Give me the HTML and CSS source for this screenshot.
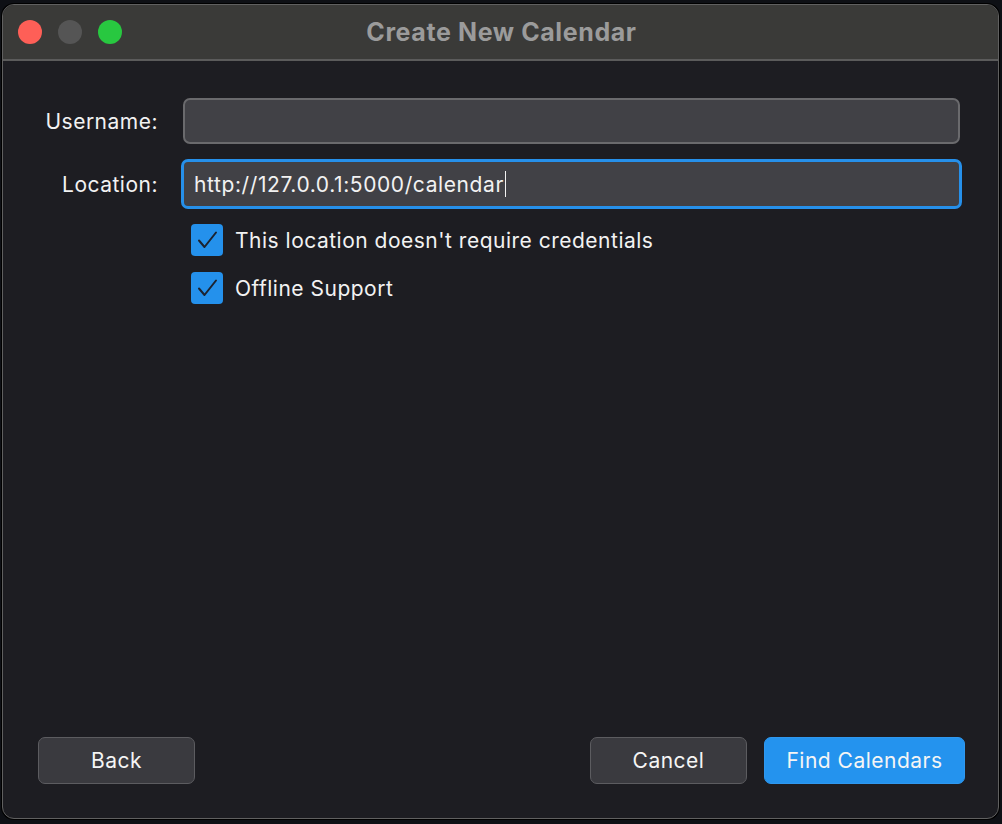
FILE: index.html
```html
<!DOCTYPE html>
<html>
<head>
<meta charset="utf-8">
<link rel="stylesheet" href="styles.css">
</head>
<body>
<div class="window">
  <div class="titlebar">
    <div class="lights">
      <span class="light red"></span>
      <span class="light gray"></span>
      <span class="light green"></span>
    </div>
    <div class="title">Create New Calendar</div>
  </div>
  <div class="content">
    <div class="form">
      <div class="row">
        <label class="label">Username:</label>
        <div class="input"></div>
      </div>
      <div class="row row-loc">
        <label class="label">Location:</label>
        <div class="input focused"><span>http://127.0.0.1:5000/calendar</span><span class="caret"></span></div>
      </div>
      <div class="checks">
        <div class="check">
          <span class="box"><svg width="32" height="32" viewBox="0 0 32 32"><path d="M8 16.5 L13.5 23 L25 8.5" fill="none" stroke="#1c2330" stroke-width="2" stroke-linecap="round" stroke-linejoin="round"/></svg></span>
          <span class="check-text">This location doesn't require credentials</span>
        </div>
        <div class="check">
          <span class="box"><svg width="32" height="32" viewBox="0 0 32 32"><path d="M8 16.5 L13.5 23 L25 8.5" fill="none" stroke="#1c2330" stroke-width="2" stroke-linecap="round" stroke-linejoin="round"/></svg></span>
          <span class="check-text">Offline Support</span>
        </div>
      </div>
    </div>
    <div class="footer">
      <button class="btn">Back</button>
      <div class="right">
        <button class="btn">Cancel</button>
        <button class="btn primary">Find Calendars</button>
      </div>
    </div>
  </div>
</div>
</body>
</html>
```

FILE: styles.css
```css
html, body {
  margin: 0;
  padding: 0;
  background: #0e1015;
  width: 1002px;
  height: 824px;
  overflow: hidden;
  font-family: Inter, "Liberation Sans", sans-serif;
}
body {
  padding: 4px 3px 5px 2px;
  box-sizing: border-box;
}
.window {
  height: 815px;
  box-sizing: border-box;
  border: 1px solid #606060;
  border-radius: 12px;
  box-shadow: 0 0 0 1px #000;
  overflow: hidden;
  display: flex;
  flex-direction: column;
  background: #1d1d22;
}
.titlebar {
  height: 54px;
  flex: none;
  background: #3a3a38;
  border-bottom: 2px solid #5b5b5b;
  position: relative;
  display: flex;
  align-items: center;
  justify-content: center;
}
.lights {
  position: absolute;
  left: 15px;
  top: 15px;
  display: flex;
  gap: 16px;
}
.light {
  width: 24px;
  height: 24px;
  border-radius: 50%;
  display: block;
}
.red { background: #fe5f57; }
.gray { background: #555555; }
.green { background: #28c840; }
.title {
  color: #9b9b9b;
  font-size: 25px;
  font-weight: 700;
  letter-spacing: 0.6px;
  margin-left: 2px;
  margin-top: 0;
}
.content {
  flex: 1;
  display: flex;
  flex-direction: column;
  justify-content: space-between;
  padding: 37px 0 34px 0;
  font-size: 21px;
  letter-spacing: 0.5px;
}
.form {
  display: flex;
  flex-direction: column;
}
.row {
  display: flex;
  align-items: center;
}
.row-loc {
  margin-top: 15px;
}
.label {
  width: 155px;
  text-align: right;
  color: #f2f2f2;
  flex: none;
}
.input {
  margin-left: 25px;
  width: 777px;
  height: 46px;
  box-sizing: border-box;
  background: #414146;
  border: 2px solid #6a6a6d;
  border-radius: 7px;
  display: flex;
  align-items: center;
  color: #f2f2f2;
  padding-left: 10px;
}
.input.focused {
  margin-left: 23px;
  width: 781px;
  height: 50px;
  border: 3px solid #2690ea;
  letter-spacing: 0.6px;
}
.caret {
  display: inline-block;
  width: 1.5px;
  height: 26px;
  background: #f2f2f2;
  margin-left: 1px;
}
.checks {
  margin-left: 188px;
  margin-top: 15px;
  display: flex;
  flex-direction: column;
  gap: 16px;
}
.check {
  display: flex;
  align-items: center;
  gap: 12px;
}
.box {
  width: 32px;
  height: 32px;
  background: #2491ec;
  border-radius: 4px;
  display: block;
  flex: none;
}
.box svg { display: block; }
.check-text {
  color: #f2f2f2;
}
.footer {
  display: flex;
  justify-content: space-between;
  padding: 0 33px 0 35px;
}
.right {
  display: flex;
  gap: 17px;
}
.btn {
  height: 47px;
  width: 157px;
  box-sizing: border-box;
  background: #3a3a3f;
  border: 1.5px solid #5c5c60;
  border-radius: 7px;
  color: #f5f5f5;
  font-family: inherit;
  font-size: 21px;
  letter-spacing: 0.5px;
  padding: 0;
}
.btn.primary {
  width: 201px;
  background: #2493ee;
  border-color: #2f98ef;
}
```
